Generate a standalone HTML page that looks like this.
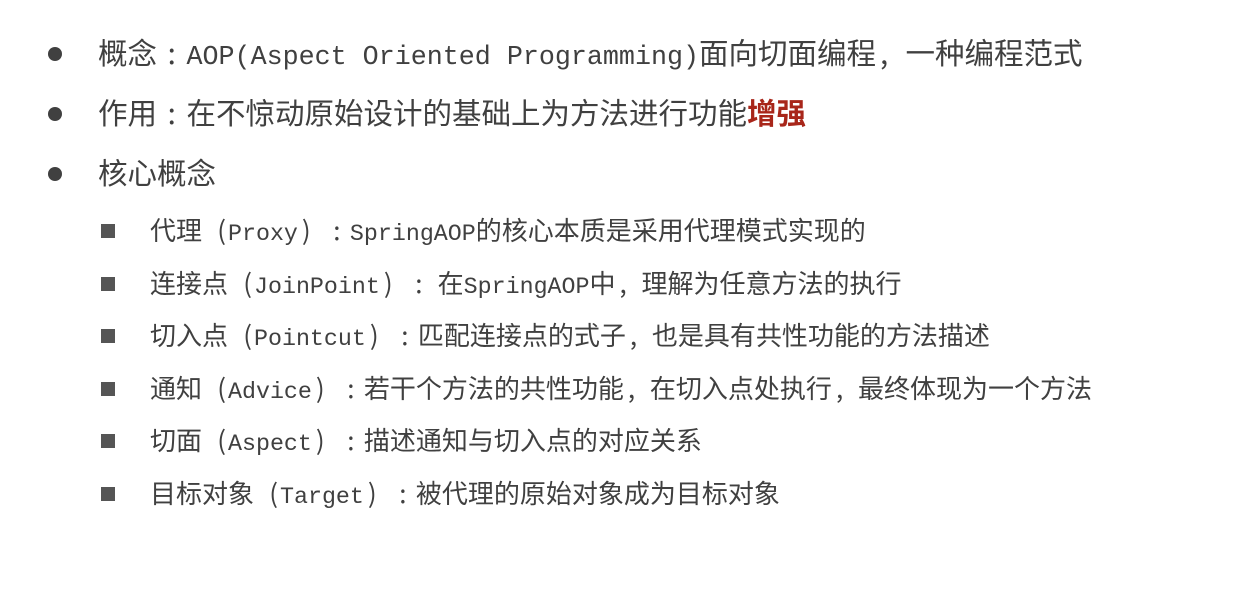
<!DOCTYPE html>
<html><head><meta charset="utf-8"><style>
body{margin:0;width:1253px;height:595px;background:#fff;overflow:hidden;position:relative;color:#404040;font-family:"Noto Sans CJK SC","Liberation Sans",sans-serif}
.l{position:absolute;white-space:nowrap;line-height:1}
.b1{font-size:29.5px;left:98px}
.b2{font-size:26px;left:150px}
.m1{font-family:"Liberation Mono",monospace;font-size:26.7px}
.m2{font-family:"Liberation Mono",monospace;font-size:23.3px}
.p{display:inline-block;width:1em;text-align:center}
.pl{display:inline-block;width:1em;text-align:right;padding-right:2px;box-sizing:border-box}
.pr{display:inline-block;width:1em;text-align:left;padding-left:4px;box-sizing:border-box}
.dot{position:absolute;left:48px;width:14px;height:14px;border-radius:50%;background:#404040}
.sq{position:absolute;left:101px;width:14px;height:14px;background:#555}
.r{color:#a8261a;font-weight:bold}
</style></head><body>
<div class="dot" style="top:47px"></div>
<div class="l b1" style="top:38px">概念<span class="p">:</span><span class="m1">AOP(Aspect Oriented Programming)</span>面向切面编程<span class="pr">,</span>一种编程范式</div>
<div class="dot" style="top:107px"></div>
<div class="l b1" style="top:98px">作用<span class="p">:</span>在不惊动原始设计的基础上为方法进行功能<span class="r">增强</span></div>
<div class="dot" style="top:167px"></div>
<div class="l b1" style="top:158px">核心概念</div>

<div class="sq" style="top:224px"></div>
<div class="l b2" style="top:217px">代理<span class="pl">(</span><span class="m2">Proxy</span><span class="pr">)</span><span class="p">:</span><span class="m2">SpringAOP</span>的核心本质是采用代理模式实现的</div>
<div class="sq" style="top:277px"></div>
<div class="l b2" style="top:270px">连接点<span class="pl">(</span><span class="m2">JoinPoint</span><span class="pr">)</span><span class="p">:</span> 在<span class="m2">SpringAOP</span>中<span class="pr">,</span>理解为任意方法的执行</div>
<div class="sq" style="top:329px"></div>
<div class="l b2" style="top:322px">切入点<span class="pl">(</span><span class="m2">Pointcut</span><span class="pr">)</span><span class="p">:</span>匹配连接点的式子<span class="pr">,</span>也是具有共性功能的方法描述</div>
<div class="sq" style="top:382px"></div>
<div class="l b2" style="top:375px">通知<span class="pl">(</span><span class="m2">Advice</span><span class="pr">)</span><span class="p">:</span>若干个方法的共性功能<span class="pr">,</span>在切入点处执行<span class="pr">,</span>最终体现为一个方法</div>
<div class="sq" style="top:434px"></div>
<div class="l b2" style="top:427px">切面<span class="pl">(</span><span class="m2">Aspect</span><span class="pr">)</span><span class="p">:</span>描述通知与切入点的对应关系</div>
<div class="sq" style="top:487px"></div>
<div class="l b2" style="top:480px">目标对象<span class="pl">(</span><span class="m2">Target</span><span class="pr">)</span><span class="p">:</span>被代理的原始对象成为目标对象</div>
</body></html>
